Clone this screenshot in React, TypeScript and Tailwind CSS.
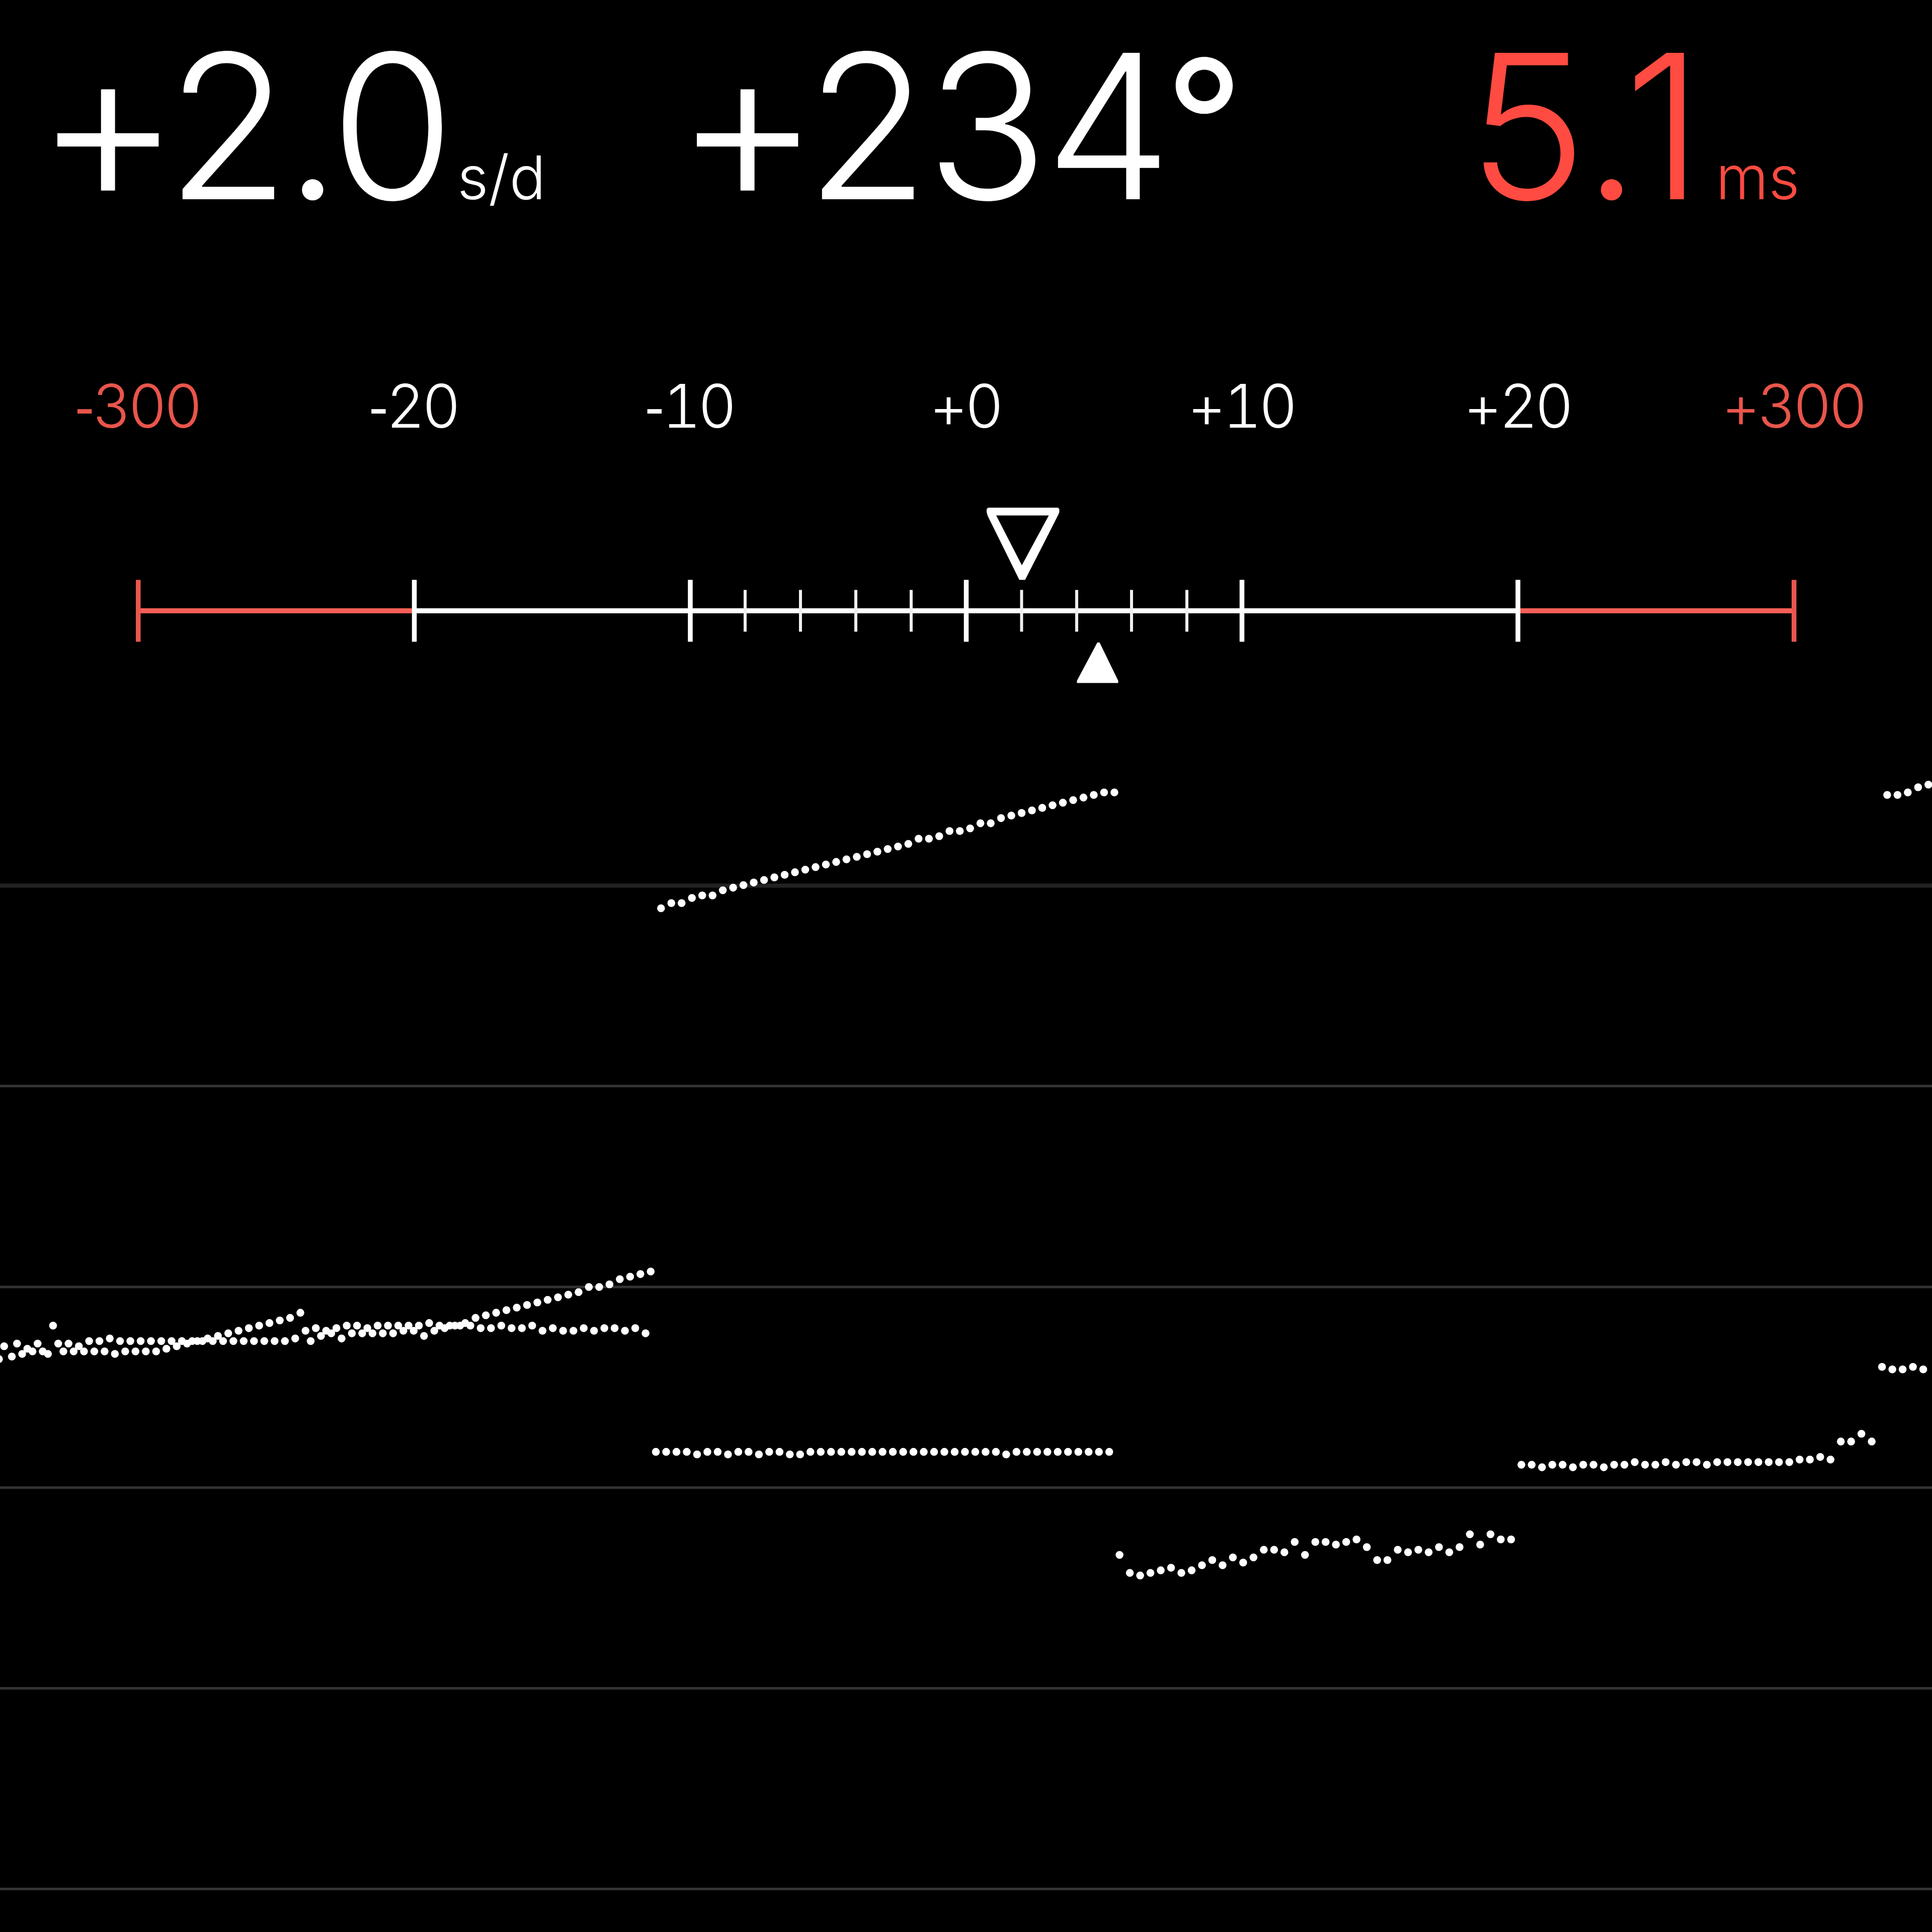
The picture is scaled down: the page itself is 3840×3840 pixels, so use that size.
const labels = [
  { sign: "-", value: "300", alert: true },
  { sign: "-", value: "20", alert: false },
  { sign: "-", value: "10", alert: false },
  { sign: "+", value: "0", alert: false },
  { sign: "+", value: "10", alert: false },
  { sign: "+", value: "20", alert: false },
  { sign: "+", value: "300", alert: true },
];

const majorTicks = [823.5, 1372, 1920.5, 2468.5, 3017];
const minorTicks = [1481, 1591, 1701, 1811, 2030.5, 2140, 2249, 2359];
const gridLines = [421.6, 499.6, 577.5, 655.4, 733.3];

// One dot every 4 units along the paper strip
const traces = [
  {
    start: 4,
    rows: [
      526, 525, 524, 524, 514, 524, 524, 524, 524, 524, 525, 524, 524, 524, 524, 523,
      522, 521, 520, 519, 518, 517, 516, 515, 514, 513, 512, 511, 509, 520, 518,
      517, 519, 517, 517, 517, 517, 517, 516, 516, 518, 516, 515, 514, 513,
      511, 510, 509, 508, 507, 506, 505, 504, 503, 502, 501, 499, 499, 498, 496,
      495, 494, 493,
      352, 350, 350, 348, 347, 347, 345, 344, 343, 342, 341, 340, 339, 338, 337,
      336, 335, 334, 333, 332, 331, 330, 329, 328, 327, 325, 325, 324, 322, 322,
      321, 319, 319, 317, 316, 315, 314, 313, 312, 311, 310, 309, 308, 307, 307,
    ],
  },
  {
    start: 6,
    rows: [
      521, 523, 521, 525, 521, 521, 522, 520, 520, 519, 520, 520, 520, 520, 520,
      520, 520, 520, 520, 520, 520, 520, 520, 520, 520, 520, 520, 519, 516, 515,
      516, 515, 514, 514, 515, 514, 514, 514, 514, 514, 513, 514, 514, 514, 514,
      515, 515, 514, 515, 515, 514, 516, 515, 516, 516, 515, 516, 515, 515, 516,
      515, 517,
      563, 563, 563, 563, 564, 563, 563, 564, 563, 563, 564, 563, 563, 564, 564,
      563, 563, 563, 563, 563, 563, 563, 563, 563, 563, 563, 563, 563, 563, 563,
      563, 563, 563, 563, 564, 563, 563, 563, 563, 563, 563, 563, 563, 563, 563,
      603, 610, 611, 610, 609, 608, 610, 609, 607, 605, 607, 604, 606, 604, 601,
      601, 602, 598, 603, 598, 598, 599, 598, 597, 600, 605, 605, 601, 602, 601,
      602, 600, 602, 600, 595, 599, 595, 597, 597,
      568, 568, 569, 568, 568, 569, 568, 568, 569, 568, 568, 567, 568, 568, 567,
      568, 567, 567, 568, 567, 567, 567, 567, 567, 567, 567, 567, 566, 566, 565,
      566, 559, 559, 556, 559, 530, 531, 531, 530, 531,
    ],
  },
  { start: 732, rows: [308, 308, 307, 305, 304] },
  { start: -1, rows: [527] },
  { start: 1, rows: [522] },
];

export default function App() {
  return (
    <main className="h-[3840px] w-[3840px] overflow-hidden bg-black font-['Inter',sans-serif] text-white">
      <header className="flex h-[748px] items-baseline pt-[50px] text-[400px] leading-none font-light whitespace-nowrap">
        <div className="flex w-[1340px] items-baseline pl-[69px]">
          <p className="tracking-[-11px]">
            <span className="mr-[-19px] align-[-9px] text-[446px] leading-[0]">+</span>
            2.0
          </p>
          <span className="ml-[16px] text-[120px] font-[270]">s/d</span>
        </div>

        <div className="flex w-[1577px] items-baseline">
          <p className="tracking-[-6px]">
            <span className="mr-[-24px] align-[-9px] text-[446px] leading-[0]">+</span>
            234
            <span className="ml-[-8px] align-[30px] text-[345px] leading-[0] font-[430]">°</span>
          </p>
        </div>

        <div className="flex items-baseline text-[#ff4b41]">
          <p className="tracking-[3px]">5.1</p>
          <span className="ml-[22px] text-[120px] font-[270]">ms</span>
        </div>
      </header>

      <div className="grid h-[152px] grid-cols-7 text-center text-[119px] leading-none font-[270] tracking-[-6px] tabular-nums">
        {labels.map(({ sign, value, alert }) => (
          <p key={sign + value} className={alert ? "text-[#e8554b]" : "text-white"}>
            <span
              className={
                sign === "-"
                  ? "mr-[5px] align-[-4px] font-['Roboto'] leading-[0] font-normal"
                  : "-ml-[4px]"
              }
            >
              {sign}
            </span>
            {value}
          </p>
        ))}
      </div>

      <svg viewBox="0 900 3840 508" className="block h-[508px] w-[3840px]">
        <rect x="274" y="1209" width="549" height="10" fill="#f75f57" />
        <rect x="3017" y="1209" width="549" height="10" fill="#f75f57" />
        <rect x="823" y="1209" width="2194" height="10" fill="#fff" />
        <rect x="270" y="1152.5" width="9.5" height="123" fill="#e8574d" />
        <rect x="3561" y="1152.5" width="9.5" height="123" fill="#e8574d" />
        {majorTicks.map((x) => (
          <rect key={x} x={x - 4.75} y="1152.5" width="9.5" height="123" fill="#fff" />
        ))}
        {minorTicks.map((x) => (
          <rect key={x} x={x - 3} y="1172.5" width="6" height="83" fill="#eee" />
        ))}
        {/* current rate */}
        <path
          fill="#fff"
          fillRule="evenodd"
          d="M1964 1009H2103L2105.5 1012V1018L2102.5 1025L2037.5 1152.5H2026L1963 1025L1961 1018V1012ZM1980 1024.5L2031 1123.5L2084.5 1024.5Z"
        />
        {/* average rate */}
        <path fill="#fff" d="M2181 1277H2185.5L2222.5 1353V1357.5H2140.5V1353Z" />
      </svg>

      <svg viewBox="0 275 750 475" className="block h-[2432px] w-[3840px]">
        <rect x="0" y="343" width="750" height="1.6" fill="#222" />
        {gridLines.map((y) => (
          <rect key={y} x="0" y={y - 0.5} width="750" height="1" fill="#333" />
        ))}
        {traces.map(({ start, rows }) =>
          rows.map((row, i) => (
            <circle
              key={`${start}-${i}`}
              cx={start + i * 4 + 0.6}
              cy={row + 0.6}
              r="1.52"
              fill="#fff"
            />
          )),
        )}
      </svg>
    </main>
  );
}
